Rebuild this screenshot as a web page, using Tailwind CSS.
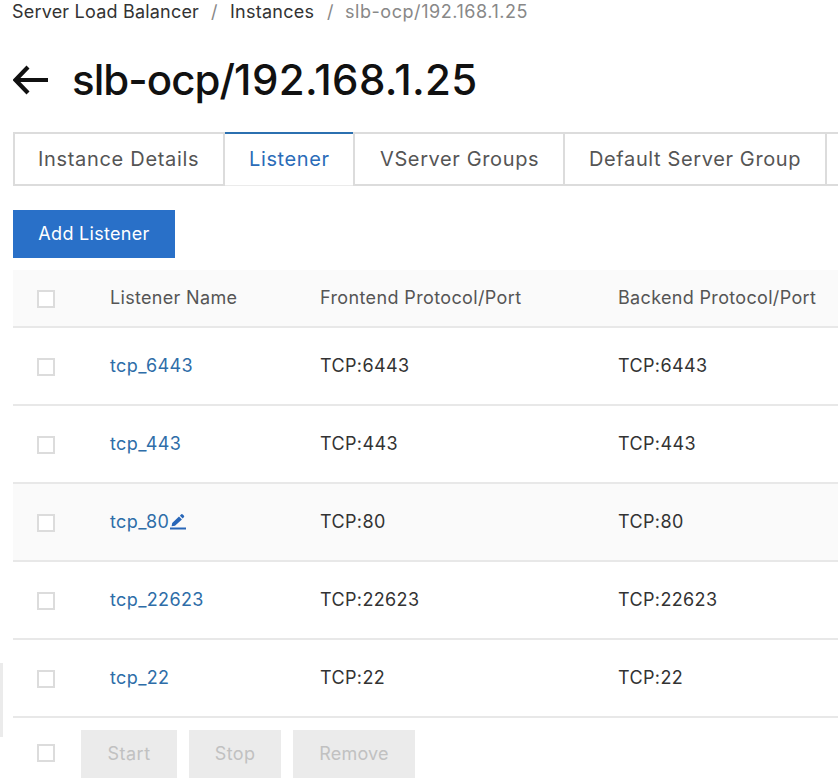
<!DOCTYPE html>
<html lang="en">
<head>
<meta charset="utf-8">
<title>Server Load Balancer</title>
<script src="https://cdn.jsdelivr.net/npm/@tailwindcss/browser@4"></script>
</head>
<body class="relative h-[782px] w-[838px] overflow-hidden bg-white font-['Inter',sans-serif] text-[18px] leading-6 tracking-[0.37px] text-[#333]">
<div class="absolute left-0 top-[663px] h-[74px] w-[3px] bg-[#ebebeb]"></div>
<main class="pl-[13px]">
  <nav class="flex h-6 whitespace-nowrap">
    <a class="-ml-px w-[199px] tracking-[0.2px]">Server Load Balancer</a><span class="w-[18px] text-[#888]">/</span><a class="ml-px w-[97px] tracking-[0.25px]">Instances</a><span class="w-[18px] text-[#888]">/</span><span class="tracking-[0.55px] text-[#888]">slb-ocp/192.168.1.25</span>
  </nav>
  <header class="flex h-[108px] items-center text-[#111]">
    <svg class="mt-[3px] mr-[24px] h-[30px] w-[35px]" viewBox="0 0 35 30" fill="none" stroke="currentColor" stroke-width="4.2"><path d="M35 15H3M15 2L2.5 15 15 28"/></svg>
    <h1 class="mt-[3px] text-[42px] leading-[52px] font-medium tracking-[0.35px] whitespace-nowrap"><span class="tracking-[-0.95px]">slb-ocp/</span>192.168.1.25</h1>
  </header>
  <div class="flex h-[54px] overflow-hidden text-[20px] tracking-[0.62px] whitespace-nowrap text-[#555]">
    <div class="w-[212px] shrink-0 border-2 border-[#dcdcdc] pl-[23px] leading-[50px] tracking-[0.68px]">Instance Details</div>
    <div class="w-[128px] shrink-0 border-t-2 border-b border-t-[#2b70b0] border-b-[#ebebeb] pl-6 leading-[50px] text-[#2b6cb8]">Listener</div>
    <div class="w-[212px] shrink-0 border-2 border-[#dcdcdc] pl-[25px] leading-[50px]">VServer Groups</div>
    <div class="w-[262px] shrink-0 border-y-2 border-r-2 border-[#dcdcdc] pl-[24px] leading-[50px]">Default Server Group</div>
    <div class="grow border-y-2 border-[#dcdcdc]"></div>
  </div>
  <button class="mt-6 block h-12 w-[162px] bg-[#2970c8] tracking-[0.3px] text-white">Add Listener</button>
  <div class="mt-3 grid h-[58px] grid-cols-[97px_210px_298px_1fr] items-center border-b-2 border-[#e8e8e8] bg-[#fafafa] whitespace-nowrap text-[#555]">
    <i class="mt-[2px] ml-6 size-[18px] border-2 border-[#dcdcdc] bg-white"></i><span class="tracking-[0.32px]">Listener Name</span><span>Frontend Protocol/Port</span><span class="tracking-[0.33px]">Backend Protocol/Port</span>
  </div>
  <div class="grid h-[78px] grid-cols-[97px_210px_298px_1fr] items-center border-b-2 border-[#e8e8e8]">
    <i class="mt-[2px] ml-6 size-[18px] border-2 border-[#dcdcdc] bg-white"></i><a class="text-[#2e6da8]">tcp_6443</a><span>TCP:6443</span><span>TCP:6443</span>
  </div>
  <div class="grid h-[78px] grid-cols-[97px_210px_298px_1fr] items-center border-b-2 border-[#e8e8e8]">
    <i class="mt-[2px] ml-6 size-[18px] border-2 border-[#dcdcdc] bg-white"></i><a class="text-[#2e6da8]">tcp_443</a><span>TCP:443</span><span>TCP:443</span>
  </div>
  <div class="grid h-[78px] grid-cols-[97px_210px_298px_1fr] items-center border-b-2 border-[#e8e8e8] bg-[#fafafa]">
    <i class="mt-[2px] ml-6 size-[18px] border-2 border-[#dcdcdc] bg-white"></i><a class="flex items-center text-[#2e6da8]">tcp_80<svg class="ml-px size-4" viewBox="0 0 16 16" fill="#2866b8"><path d="M0 13.5h16V15.5H0zM1.6 12.3l.6-3.4 6.8-6.3 2.9 2.9-6.9 6.3zM9.9 1.7L11 .5q.9-.8 1.8 0l1 1q.8.9 0 1.8l-1.1 1.2z"/></svg></a><span>TCP:80</span><span>TCP:80</span>
  </div>
  <div class="grid h-[78px] grid-cols-[97px_210px_298px_1fr] items-center border-b-2 border-[#e8e8e8]">
    <i class="mt-[2px] ml-6 size-[18px] border-2 border-[#dcdcdc] bg-white"></i><a class="text-[#2e6da8]">tcp_22623</a><span>TCP:22623</span><span>TCP:22623</span>
  </div>
  <div class="grid h-[78px] grid-cols-[97px_210px_298px_1fr] items-center border-b-2 border-[#e8e8e8]">
    <i class="mt-[2px] ml-6 size-[18px] border-2 border-[#dcdcdc] bg-white"></i><a class="text-[#2e6da8]">tcp_22</a><span>TCP:22</span><span>TCP:22</span>
  </div>
  <div class="mt-3 flex h-12 items-center gap-3 pl-6 text-[#c1c1c1]">
    <i class="mr-[14px] mb-[2px] size-[18px] border-2 border-[#dcdcdc] bg-white"></i>
    <button class="h-12 w-24 bg-[#ebebeb] tracking-[0.5px]">Start</button><button class="h-12 w-[92px] bg-[#ebebeb]">Stop</button><button class="h-12 w-[122px] bg-[#ebebeb] tracking-[0.2px]">Remove</button>
  </div>
</main>
</body>
</html>
